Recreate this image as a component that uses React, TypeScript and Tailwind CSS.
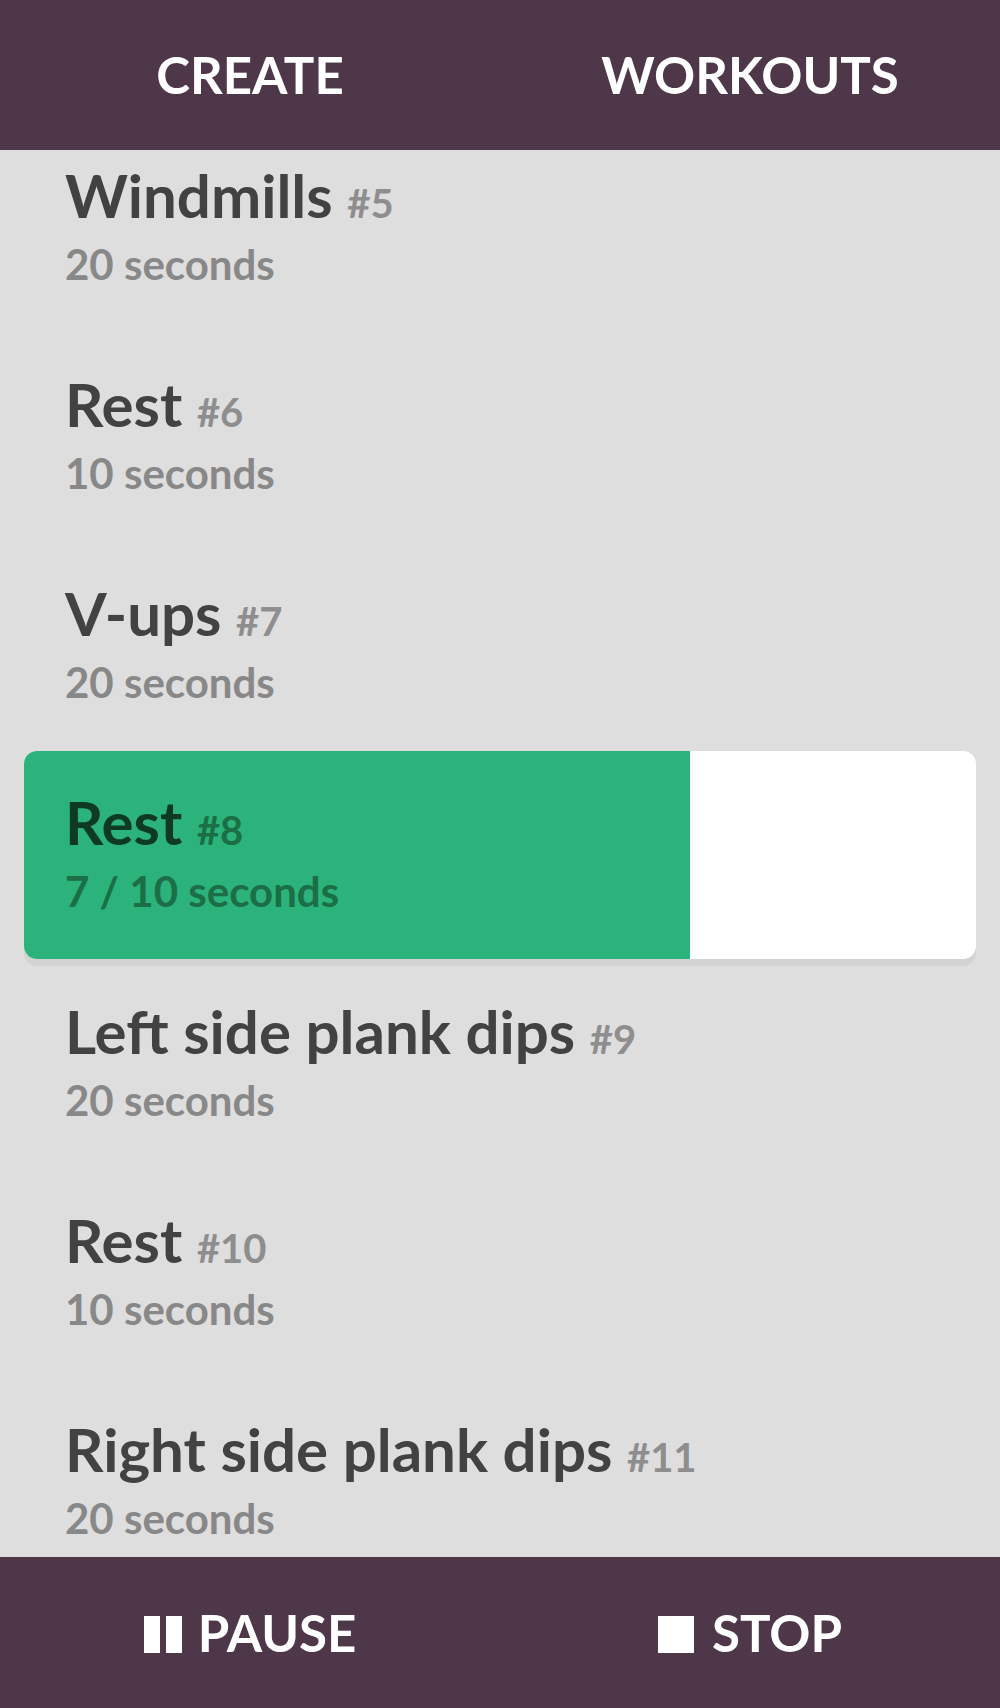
import React from "react";

interface Step {
  name: string;
  index: number;
  seconds: number;
  elapsed?: number;
}

const STEPS: Step[] = [
  { name: "Windmills", index: 5, seconds: 20 },
  { name: "Rest", index: 6, seconds: 10 },
  { name: "V-ups", index: 7, seconds: 20 },
  { name: "Rest", index: 8, seconds: 10, elapsed: 7 },
  { name: "Left side plank dips", index: 9, seconds: 20 },
  { name: "Rest", index: 10, seconds: 10 },
  { name: "Right side plank dips", index: 11, seconds: 20 },
];

function StepRow({ step }: { step: Step }) {
  const active = step.elapsed !== undefined;
  const progress = active ? (step.elapsed! / step.seconds) * 100 : 0;

  return (
    <li className="h-[209px] px-[24px]">
      <div
        className={`relative h-[208px] rounded-[13px] overflow-hidden ${
          active ? "bg-white shadow-[0_7px_0_#d3d3d3]" : ""
        }`}
      >
        {active && (
          <div className="absolute inset-y-0 left-0 bg-[#2bb37b]" style={{ width: `${progress}%` }} />
        )}
        <div className="relative pl-[41px] pt-[35px]">
          <div
            className={`text-[60px] font-bold leading-[1.2] whitespace-nowrap ${
              active ? "text-[#0e3a24]" : "text-[#424242]"
            }`}
          >
            {step.name}{" "}
            <span className={`text-[40px] ${active ? "text-[#1b6e46]" : "text-[#8e8e8e]"}`}>
              #{step.index}
            </span>
          </div>
          <div
            className={`mt-[8px] text-[42px] font-bold leading-[1.2] ${
              active ? "text-[#1b6e46]" : "text-[#888888]"
            }`}
          >
            {active ? `${step.elapsed} / ${step.seconds} seconds` : `${step.seconds} seconds`}
          </div>
        </div>
      </div>
    </li>
  );
}

export default function App() {
  return (
    <div
      className="w-[1000px] h-[1708px] flex flex-col bg-[#dedede]"
      style={{ fontFamily: "Lato, 'Open Sans', sans-serif" }}
    >
      {/* Tabs */}
      <header className="h-[150px] shrink-0 grid grid-cols-2 bg-[#4d3749] text-white text-[51px] font-bold leading-[1.2]">
        <div className="flex items-center justify-center">CREATE</div>
        <div className="flex items-center justify-center">WORKOUTS</div>
      </header>

      {/* Step list (scrolled a little) */}
      <main className="flex-1 overflow-hidden">
        <ul className="-mt-[26px]">
          {STEPS.map((s) => (
            <StepRow key={s.index} step={s} />
          ))}
        </ul>
      </main>

      {/* Controls */}
      <footer className="h-[151px] shrink-0 grid grid-cols-2 bg-[#4d3749] text-white text-[51px] font-bold leading-[1.2]">
        <div className="flex items-center justify-center gap-[16px]">
          <span className="flex gap-[6px] mt-[3px]">
            <span className="w-[16px] h-[37px] bg-white" />
            <span className="w-[16px] h-[37px] bg-white" />
          </span>
          PAUSE
        </div>
        <div className="flex items-center justify-center gap-[18px]">
          <span className="w-[36px] h-[37px] bg-white mt-[3px]" />
          STOP
        </div>
      </footer>
    </div>
  );
}
